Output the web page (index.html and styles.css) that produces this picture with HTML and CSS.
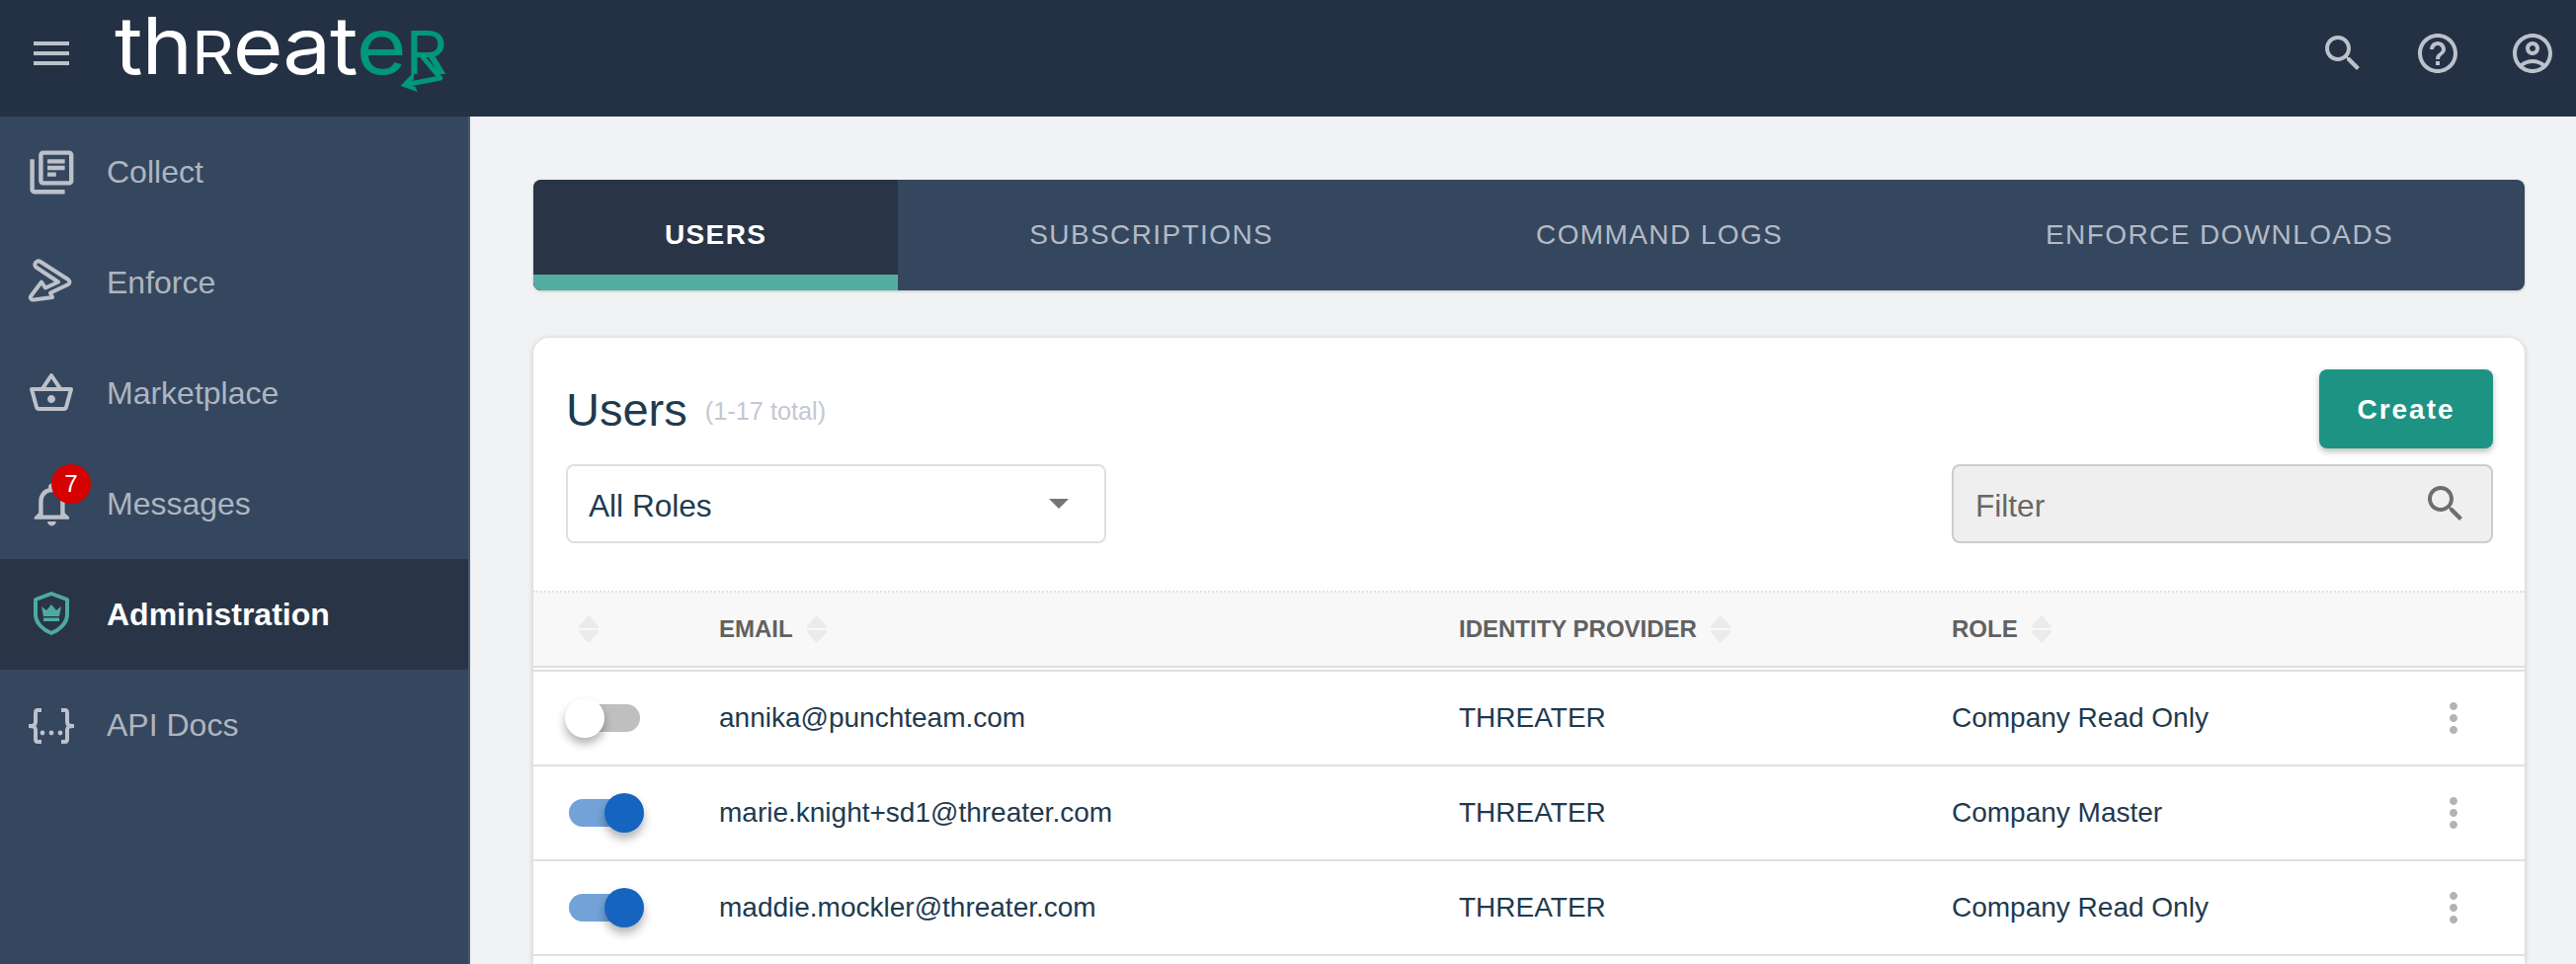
FILE: index.html
```html
<!DOCTYPE html>
<html lang="en">
<head>
<meta charset="utf-8">
<title>Threater - Users</title>
<link rel="stylesheet" href="styles.css">
</head>
<body>
<svg class="defs" width="0" height="0" aria-hidden="true">
  <defs>
    <symbol id="sort" viewBox="0 0 20 28"><path d="M10 2 L18.500 11.500 H1.500 Z M1.500 16.500 H18.500 L10 26 Z"/></symbol>
    <symbol id="more" viewBox="0 0 24 24"><path d="M12 8c1.100 0 2-.9 2-2s-.9-2-2-2-2 .9-2 2 .9 2 2 2zm0 2c-1.100 0-2 .9-2 2s.9 2 2 2 2-.9 2-2-.9-2-2-2zm0 6c-1.100 0-2 .9-2 2s.9 2 2 2 2-.9 2-2-.9-2-2-2z"/></symbol>
  </defs>
</svg>
<header class="topbar">
  <div class="topbar-left">
    <button class="icon-btn menu-btn" aria-label="Menu">
      <svg viewBox="0 0 24 24" class="icon48"><path d="M3 18h18v-2H3v2zm0-5h18v-2H3v2zm0-7v2h18V6H3z"/></svg>
    </button>
    <div class="logo">
      <span class="logo-white">th<span class="logo-r">R</span>eat</span><span class="logo-green">e<span class="logo-r">R</span></span>
      <svg class="logo-tail" viewBox="0 0 50 45" preserveAspectRatio="none"><path class="tail-line" d="M25 6 L44 29 L8 36"/><path class="tail-head" d="M18 22 L4 37 L21 43 L19 38 L11 36 L17 31 Z"/></svg>
    </div>
  </div>
  <div class="topbar-right">
    <svg viewBox="0 0 24 24" class="icon48"><path d="M15.5 14h-.79l-.28-.27C15.41 12.59 16 11.11 16 9.5 16 5.91 13.09 3 9.5 3S3 5.91 3 9.5 5.91 16 9.5 16c1.61 0 3.09-.59 4.23-1.57l.27.28v.79l5 4.99L20.49 19l-4.99-5zm-6 0C7.01 14 5 11.99 5 9.5S7.01 5 9.5 5 14 7.01 14 9.5 11.99 14 9.5 14z"/></svg>
    <svg viewBox="0 0 24 24" class="icon48"><path d="M11 18h2v-2h-2v2zm1-16C6.48 2 2 6.48 2 12s4.48 10 10 10 10-4.48 10-10S17.52 2 12 2zm0 18c-4.41 0-8-3.59-8-8s3.59-8 8-8 8 3.59 8 8-3.59 8-8 8zm0-14c-2.21 0-4 1.79-4 4h2c0-1.1.9-2 2-2s2 .9 2 2c0 2-3 1.75-3 5h2c0-2.25 3-2.5 3-5 0-2.21-1.79-4-4-4z"/></svg>
    <svg viewBox="0 0 24 24" class="icon48"><path d="M12 2C6.48 2 2 6.48 2 12s4.48 10 10 10 10-4.48 10-10S17.52 2 12 2zM7.35 18.5C8.66 17.56 10.26 17 12 17s3.34.56 4.65 1.5c-1.31.94-2.91 1.5-4.65 1.5s-3.34-.56-4.65-1.5zm10.79-1.38C16.45 15.8 14.32 15 12 15s-4.45.8-6.14 2.12C4.7 15.73 4 13.95 4 12c0-4.42 3.58-8 8-8s8 3.58 8 8c0 1.95-.7 3.73-1.86 5.12z"/><path d="M12 6c-1.93 0-3.5 1.57-3.5 3.5S10.07 13 12 13s3.5-1.57 3.5-3.5S13.93 6 12 6zm0 5c-.83 0-1.5-.67-1.5-1.5S11.17 8 12 8s1.5.67 1.5 1.5S12.83 11 12 11z"/></svg>
  </div>
</header>
<div class="layout">
  <nav class="sidebar">
    <a class="nav-item">
      <span class="nav-icon"><svg viewBox="0 0 24 24" class="icon-nav"><path d="M4 6H2v14c0 1.1.9 2 2 2h14v-2H4V6zm16-4H8c-1.1 0-2 .9-2 2v12c0 1.1.9 2 2 2h12c1.1 0 2-.9 2-2V4c0-1.1-.9-2-2-2zm0 14H8V4h12v12zM10 9h8v2h-8zm0 3h4v2h-4zm0-6h8v2h-8z"/></svg></span>
      <span>Collect</span>
    </a>
    <a class="nav-item">
      <span class="nav-icon"><svg viewBox="0 0 52 48" class="icon-enforce"><path d="M10 4 C11.500 2 13.500 2 15 3 L43 21 C45 22.500 45 24.500 43 26 L25 34.500 L27 39 L8 41.500 C5.500 42 4 39.500 5.500 37.500 L16 23.500 L20 29.500 L33 23.500 L10.500 8.500 C9 7 9 5.500 10 4 Z"/></svg></span>
      <span>Enforce</span>
    </a>
    <a class="nav-item">
      <span class="nav-icon"><svg viewBox="0 0 24 24" class="icon48"><path d="M22 9h-4.790l-4.380-6.560c-.19-.28-.51-.42-.83-.42s-.64.14-.83.43L6.790 9H2c-.55 0-1 .45-1 1 0 .09.01.18.04.27l2.540 9.270c.23.84 1 1.460 1.920 1.460h13c.92 0 1.690-.62 1.930-1.460l2.540-9.270L23 10c0-.55-.45-1-1-1zM12 4.800L14.800 9H9.200L12 4.800zM18.500 19l-12.990.01L3.310 11H20.700l-2.200 8zM12 13c-1.100 0-2 .9-2 2s.9 2 2 2 2-.9 2-2-.9-2-2-2z"/></svg></span>
      <span>Marketplace</span>
    </a>
    <a class="nav-item">
      <span class="nav-icon">
        <svg viewBox="0 0 24 24" class="icon-nav"><path d="M12 22c1.100 0 2-.9 2-2h-4c0 1.100.89 2 2 2zm6-6v-5c0-3.070-1.640-5.640-4.500-6.320V4c0-.83-.67-1.500-1.500-1.500s-1.500.67-1.500 1.500v.68C7.630 5.360 6 7.920 6 11v5l-2 2v1h16v-1l-2-2zm-2 1H8v-6c0-2.480 1.510-4.500 4-4.500s4 2.020 4 4.500v6z"/></svg>
        <span class="badge">7</span>
      </span>
      <span>Messages</span>
    </a>
    <a class="nav-item active">
      <span class="nav-icon"><svg viewBox="0 0 48 48" class="icon-shield"><path class="shield-line" d="M24 3 L40 9 V24 C40 33 32 40 24 43 C16 40 8 33 8 24 V9 Z"/><path class="shield-fill" d="M14 16 L19 20 L24 14 L29 20 L34 16 L32 26 H16 Z M16 27.500 H32 V31 H16 Z"/></svg></span>
      <span>Administration</span>
    </a>
    <a class="nav-item">
      <span class="nav-icon"><svg viewBox="0 0 48 48" class="icon-api"><path class="api-line" d="M14 9 H10 C8 9 8 11 8 12 V21 C8 24 6 25 1 25 C6 25 8 26 8 29 V38 C8 40 9 41 10 41 H14"/><path class="api-line" d="M34 9 H38 C40 9 40 11 40 12 V21 C40 24 42 25 47 25 C42 25 40 26 40 29 V38 C40 40 39 41 38 41 H34"/><circle cx="15" cy="32" r="2.400"/><circle cx="24" cy="32" r="2.400"/><circle cx="33" cy="32" r="2.400"/></svg></span>
      <span>API Docs</span>
    </a>
  </nav>
  <main class="content">
    <div class="tabs">
      <a class="tab active">USERS</a>
      <a class="tab">SUBSCRIPTIONS</a>
      <a class="tab">COMMAND LOGS</a>
      <a class="tab">ENFORCE DOWNLOADS</a>
    </div>
    <section class="card">
      <div class="card-head">
        <div class="head-row head-row-title">
          <h1 class="title">Users <small class="count">(1-17 total)</small></h1>
          <button class="create">Create</button>
        </div>
        <div class="head-row">
          <div class="select">All Roles<span class="caret"></span></div>
          <div class="filter">Filter
            <svg viewBox="0 0 24 24" class="icon-filter"><path d="M15.500 14h-.79l-.28-.27C15.410 12.590 16 11.110 16 9.500 16 5.910 13.090 3 9.500 3S3 5.910 3 9.500 5.910 16 9.500 16c1.610 0 3.090-.59 4.230-1.570l.27.28v.79l5 4.990L20.490 19l-4.990-5zm-6 0C7.010 14 5 11.990 5 9.500S7.010 5 9.500 5 14 7.010 14 9.500 11.990 14 9.500 14z"/></svg>
          </div>
        </div>
      </div>
      <div class="table">
        <div class="thead">
          <div class="cell cell-sort"><svg class="sort"><use href="#sort"/></svg></div>
          <div class="cell">EMAIL<svg class="sort"><use href="#sort"/></svg></div>
          <div class="cell">IDENTITY PROVIDER<svg class="sort"><use href="#sort"/></svg></div>
          <div class="cell">ROLE<svg class="sort"><use href="#sort"/></svg></div>
          <div class="cell"></div>
        </div>
        <div class="row">
          <div class="cell"><span class="toggle"><span class="knob"></span></span></div>
          <div class="cell">annika@punchteam.com</div>
          <div class="cell">THREATER</div>
          <div class="cell">Company Read Only</div>
          <div class="cell"><svg class="icon-more"><use href="#more"/></svg></div>
        </div>
        <div class="row">
          <div class="cell"><span class="toggle on"><span class="knob"></span></span></div>
          <div class="cell">marie.knight+sd1@threater.com</div>
          <div class="cell">THREATER</div>
          <div class="cell">Company Master</div>
          <div class="cell"><svg class="icon-more"><use href="#more"/></svg></div>
        </div>
        <div class="row">
          <div class="cell"><span class="toggle on"><span class="knob"></span></span></div>
          <div class="cell">maddie.mockler@threater.com</div>
          <div class="cell">THREATER</div>
          <div class="cell">Company Read Only</div>
          <div class="cell"><svg class="icon-more"><use href="#more"/></svg></div>
        </div>
      </div>
    </section>
  </main>
</div>
</body>
</html>
```
FILE: styles.css
```css
* { box-sizing: border-box; }
html, body { margin: 0; height: 976px; overflow: hidden; }
body {
  background: #f1f2f4;
  font-family: "Liberation Sans", Arial, sans-serif;
  color: #1e3a4f;
}
.defs { position: absolute; }
.topbar {
  height: 118px;
  background: #243144;
  display: flex;
  justify-content: space-between;
  align-items: flex-start;
  padding: 0 20px 0 28px;
}
.topbar-left { display: flex; align-items: flex-start; }
.icon-btn { background: none; border: 0; padding: 0; margin-top: 30px; display: block; line-height: 0; }
.icon48 { width: 48px; height: 48px; display: block; fill: #bcc1ca; }
.logo {
  position: relative;
  margin-left: 40px;
  font-family: "Inter", sans-serif;
  font-weight: 400;
  font-size: 80px;
  line-height: 92px;
  letter-spacing: -1px;
  white-space: nowrap;
  height: 92px;
  transform: scaleX(1.09);
  transform-origin: 0 0;
}
.logo-white { color: #fff; }
.logo-green { color: #00977a; }
.logo-r { font-size: 61px; }
.logo-tail {
  position: absolute;
  right: 0;
  top: 50px;
  width: 46px;
  height: 45px;
}
.tail-line { fill: none; stroke: #00977a; stroke-width: 5; stroke-linejoin: round; }
.tail-head { fill: #00977a; }
.topbar-right { display: flex; gap: 48px; padding-top: 30px; }
.layout { display: flex; height: 858px; }
.sidebar {
  width: 476px;
  flex: none;
  background: #35475e;
  border-right: 2px solid #4a5b72;
}
.nav-item {
  height: 112px;
  display: flex;
  align-items: center;
  padding-left: 108px;
  position: relative;
  color: #aeb5c1;
  font-size: 32px;
}
.nav-item.active { background: #293547; color: #fff; font-weight: 700; }
.nav-icon {
  position: absolute;
  left: 22px;
  top: 32px;
  width: 60px;
  height: 48px;
  display: flex;
  align-items: center;
  justify-content: center;
}
.icon-nav { width: 52.8px; height: 52.8px; fill: #bcc1ca; flex: none; }
.icon-enforce { width: 52px; height: 48px; fill: none; stroke: #bcc1ca; stroke-width: 4; stroke-linejoin: round; flex: none; }
.icon-shield { width: 48px; height: 48px; flex: none; }
.shield-line { fill: none; stroke: #4fab9f; stroke-width: 4; stroke-linejoin: round; }
.shield-fill { fill: #4fab9f; }
.icon-api { width: 48px; height: 48px; fill: #bcc1ca; flex: none; }
.api-line { fill: none; stroke: #bcc1ca; stroke-width: 4; }
.badge {
  position: absolute;
  left: 30px;
  top: -16px;
  width: 40px;
  height: 40px;
  border-radius: 50%;
  background: #d50000;
  color: #fff;
  font-size: 24px;
  line-height: 40px;
  text-align: center;
}
.content { flex: 1; padding: 64px 52px 0 64px; min-width: 0; }
.tabs {
  display: flex;
  height: 112px;
  background: #35475e;
  border-radius: 8px;
  overflow: hidden;
  box-shadow: 0 1px 3px rgba(0,0,0,.2);
}
.tab {
  flex: auto;
  display: flex;
  align-items: center;
  justify-content: center;
  padding: 0 130px;
  white-space: nowrap;
  font-size: 28px;
  letter-spacing: 1.4px;
  color: #b4bac5;
}
.tab.active {
  background: #293547;
  color: #fff;
  font-weight: 700;
  box-shadow: inset 0 -16px 0 #54ada1;
}
.card {
  margin-top: 48px;
  height: 634px;
  background: #fff;
  border-radius: 16px 16px 0 0;
  box-shadow: 0 1px 6px rgba(0,0,0,.18);
}
.card-head { padding: 32px 32px 48px 33px; display: flex; flex-direction: column; gap: 16px; }
.head-row { display: flex; justify-content: space-between; height: 80px; }
.head-row-title { align-items: center; }
.title { margin: 0; padding-top: 2px; font-size: 47px; font-weight: 400; color: #1e3a4f; line-height: 80px; }
.count { font-size: 25.3px; color: #c3c8d1; margin-left: 5px; vertical-align: 6px; }
.create {
  width: 176px;
  height: 80px;
  border: 0;
  border-radius: 8px;
  padding: 2px 0 0;
  background: #1d9483;
  color: #fff;
  font-family: "Liberation Sans", Arial, sans-serif;
  font-weight: 700;
  font-size: 28px;
  letter-spacing: 2px;
  box-shadow: 0 3px 6px rgba(0,0,0,.28);
}
.select {
  position: relative;
  width: 547px;
  border: 2px solid #e0e0e0;
  border-radius: 8px;
  padding-left: 21px;
  font-size: 31.6px;
  line-height: 80px;
  color: #1e3a4f;
}
.caret {
  position: absolute;
  right: 36px;
  top: 33px;
  width: 0;
  height: 0;
  border-left: 10px solid transparent;
  border-right: 10px solid transparent;
  border-top: 10px solid #757575;
}
.filter {
  position: relative;
  width: 548px;
  background: #efefef;
  border: 2px solid #ccc;
  border-radius: 8px;
  padding-left: 22px;
  font-size: 31.6px;
  line-height: 80px;
  color: #666;
}
.icon-filter { position: absolute; right: 22px; top: 14px; width: 48px; height: 48px; fill: #6e6e6e; }
.table { border-top: 2px dotted #e0e0e0; }
.thead, .row {
  display: grid;
  grid-template-columns: 188px 749px 500px 1fr 100px;
  align-items: center;
}
.thead {
  height: 76px;
  background: #f8f8f8;
  border-bottom: 2px solid #e0e0e0;
  font-size: 24px;
  font-weight: 700;
  color: #616161;
  margin-bottom: 4px;
  position: relative;
}
.thead::after {
  content: "";
  position: absolute;
  left: 0;
  right: 0;
  bottom: -6px;
  height: 2px;
  background: #e0e0e0;
}
.thead .cell:nth-child(4) { margin-left: -1px; }
.row { height: 96px; border-bottom: 2px solid #e0e0e0; font-size: 28px; color: #1e3a4f; }
.row .cell:nth-child(4) { margin-left: -1px; }
.cell { display: flex; align-items: center; }
.cell-sort { padding-left: 46px; }
.sort {
  display: block;
  flex: none;
  width: 20px;
  height: 28px;
  margin-left: 14px;
  fill: #ebebeb;
  stroke: #ebebeb;
  stroke-width: 3;
  stroke-linejoin: round;
}
.cell-sort .sort { margin-left: 0; }
.toggle {
  position: relative;
  display: block;
  width: 72px;
  height: 28px;
  margin-left: 36px;
  border-radius: 14px;
  background: #bfbfbf;
}
.knob {
  position: absolute;
  left: -4px;
  top: -6px;
  width: 40px;
  height: 40px;
  border-radius: 50%;
  background: #fff;
  box-shadow: 0 6px 10px rgba(0,0,0,.3);
}
.toggle.on { background: #72a2d8; }
.toggle.on .knob { left: auto; right: -4px; background: #1565c0; }
.icon-more { width: 48px; height: 48px; fill: #b3b3b3; margin-left: 4px; }
```
